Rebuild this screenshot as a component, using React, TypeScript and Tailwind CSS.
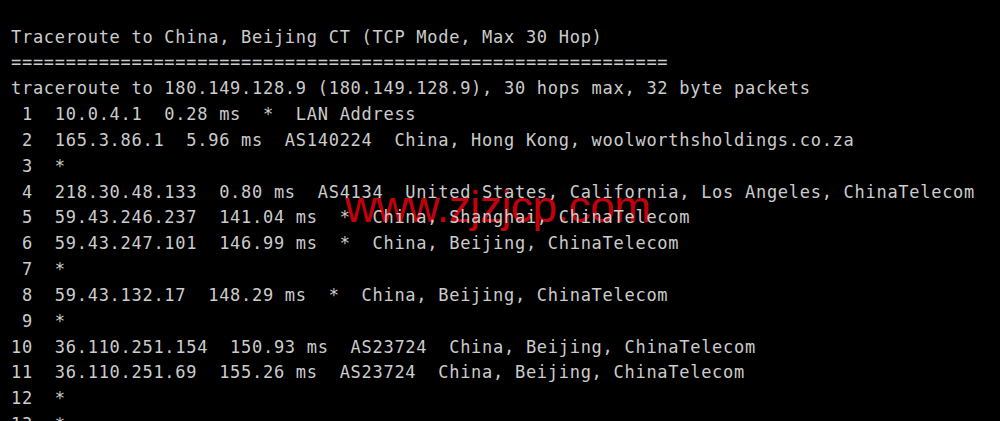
import React from "react";

const lines = [
  "Traceroute to China, Beijing CT (TCP Mode, Max 30 Hop)",
  "============================================================",
  "traceroute to 180.149.128.9 (180.149.128.9), 30 hops max, 32 byte packets",
  " 1  10.0.4.1  0.28 ms  *  LAN Address",
  " 2  165.3.86.1  5.96 ms  AS140224  China, Hong Kong, woolworthsholdings.co.za",
  " 3  *",
  " 4  218.30.48.133  0.80 ms  AS4134  United States, California, Los Angeles, ChinaTelecom",
  " 5  59.43.246.237  141.04 ms  *  China, Shanghai, ChinaTelecom",
  " 6  59.43.247.101  146.99 ms  *  China, Beijing, ChinaTelecom",
  " 7  *",
  " 8  59.43.132.17  148.29 ms  *  China, Beijing, ChinaTelecom",
  " 9  *",
  "10  36.110.251.154  150.93 ms  AS23724  China, Beijing, ChinaTelecom",
  "11  36.110.251.69  155.26 ms  AS23724  China, Beijing, ChinaTelecom",
  "12  *",
  "13  *",
];

const App = () => {
  return (
    <div className="relative w-[1000px] h-[421px] overflow-hidden bg-black">
      {/* watermark sits under the terminal text */}
      <div className="absolute left-[345px] top-[185px] text-[44px] leading-[44px] tracking-[-0.35px] text-[#c4000c] font-['Liberation_Sans',Arial,sans-serif] whitespace-nowrap select-none">
        www.zjzjcp.com
      </div>
      <pre className="relative pt-[24.5px] pl-[11px] text-[17px] leading-[25.85px] tracking-[0.72px] text-[#cccccc] font-['DejaVu_Sans_Mono',monospace] whitespace-pre">
        {lines.join("\n")}
      </pre>
    </div>
  );
};

export default App;
